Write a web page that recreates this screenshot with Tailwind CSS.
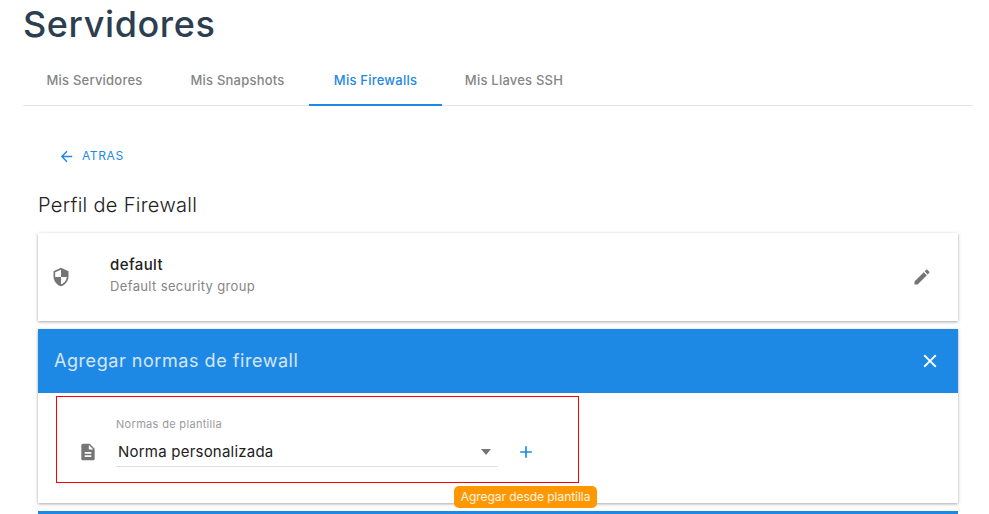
<!DOCTYPE html>
<html lang="en">
<head>
  <meta charset="utf-8" />
  <title>Servidores</title>
  <script src="https://cdn.jsdelivr.net/npm/@tailwindcss/browser@4"></script>
</head>
<body class="bg-white h-[514px] overflow-hidden font-['Inter',sans-serif] relative">
  <main class="pl-[23px] pr-4">
    <h1 class="h-[48px] text-[36px] leading-[49px] tracking-[0.6px] font-medium text-[#2c3e50]">Servidores</h1>

    <!-- tabs -->
    <nav class="mt-[7px] h-[51px] flex border-b border-[#e3e5e7] text-[13px] tracking-[0.22px] font-medium text-[#858585]">
      <a class="w-[143px] h-[51px] leading-[50px] text-center">Mis Servidores</a>
      <a class="w-[143px] h-[51px] leading-[50px] text-center">Mis Snapshots</a>
      <a class="w-[133px] h-[51px] leading-[50px] text-center text-[#1e88e5] border-b-2 border-[#1e88e5]">Mis Firewalls</a>
      <a class="w-[144px] h-[51px] leading-[50px] text-center">Mis Llaves SSH</a>
    </nav>

    <div class="px-[15px]">
      <!-- back -->
      <a class="mt-[40px] ml-[20px] h-[20px] flex items-center gap-[7px] text-[12px] tracking-[0.6px] text-[#1e88e5]">
        <svg class="w-[17px] h-[17px]" viewBox="0 0 24 24" fill="currentColor"><path d="M20 11H7.83l5.59-5.59L12 4l-8 8 8 8 1.41-1.41L7.83 13H20v-2z"/></svg>
        ATRAS
      </a>

      <h2 class="mt-[25px] h-[28px] text-[20px] leading-[28px] tracking-[0.3px] font-light text-[#212121]">Perfil de Firewall</h2>

      <!-- profile card -->
      <section class="mt-[14px] h-[88px] flex items-center bg-white shadow-[0_1px_3px_rgba(0,0,0,0.35)]">
        <svg class="ml-[13px] w-[20px] h-[20px] text-[#757575]" viewBox="0 0 24 24" fill="currentColor"><path d="M12 1 3 5v6c0 5.55 3.84 10.74 9 12 5.16-1.26 9-6.45 9-12V5l-9-4zm0 10.99h7c-.53 4.12-3.28 7.79-7 8.94V12H5V6.3l7-3.11v8.8z"/></svg>
        <div class="ml-[39px] flex-1 -mt-[3px]">
          <div class="text-[15px] leading-[20px] tracking-[0.4px] font-medium text-[#212121]">default</div>
          <div class="mt-[1px] text-[13px] leading-[20px] tracking-[0.36px] text-[#858585]">Default security group</div>
        </div>
        <svg class="mr-[26px] w-[20px] h-[20px] text-[#757575]" viewBox="0 0 24 24" fill="currentColor"><path d="M3 17.25V21h3.75L17.81 9.94l-3.75-3.75L3 17.25zM20.71 7.04a1 1 0 0 0 0-1.41l-2.34-2.34a1 1 0 0 0-1.41 0l-1.83 1.83 3.75 3.75 1.83-1.83z"/></svg>
      </section>

      <!-- add rules -->
      <section class="mt-[8px] h-[174px] bg-white shadow-[0_1px_3px_rgba(0,0,0,0.35)]">
        <header class="h-[64px] bg-[#1e88e5] flex items-center justify-between pl-[16px] pr-[17px] pb-[2px] text-white">
          <span class="text-[18px] tracking-[0.55px] text-white/80">Agregar normas de firewall</span>
          <svg class="w-[22px] h-[22px] mt-[2px]" viewBox="0 0 24 24" fill="currentColor"><path d="M19 6.41 17.59 5 12 10.59 6.41 5 5 6.41 10.59 12 5 17.59 6.41 19 12 13.41 17.59 19 19 17.59 13.41 12z"/></svg>
        </header>
        <div class="flex items-end pl-[40px] pt-[24px]">
          <svg class="mb-[5px] w-[20px] h-[20px] text-[#757575]" viewBox="0 0 24 24" fill="currentColor"><path d="M14 2H6c-1.1 0-2 .9-2 2v16c0 1.1.9 2 2 2h12c1.1 0 2-.9 2-2V8l-6-6zm2 16H8v-2h8v2zm0-4H8v-2h8v2zm-3-5V3.5L18.5 9H13z"/></svg>
          <div class="ml-[18px] w-[382px] border-b border-[#e0e0e0]">
            <div class="text-[11px] leading-[14px] tracking-[0.32px] text-[#9a9a9a]">Normas de plantilla</div>
            <div class="mt-[7px] h-[28px] flex items-center justify-between pl-[2px] text-[15px] tracking-[0.22px] text-[#212121]">
              Norma personalizada
              <span class="mr-[7px] w-0 h-0 border-x-[5px] border-x-transparent border-t-[6px] border-t-[#757575]"></span>
            </div>
          </div>
          <svg class="ml-[18px] mb-[5px] w-[20px] h-[20px] text-[#1e88e5]" viewBox="0 0 24 24" fill="currentColor"><path d="M19 13h-6v6h-2v-6H5v-2h6V5h2v6h6v2z"/></svg>
        </div>
      </section>

      <section class="mt-[8px] h-[3px] bg-[#1e88e5]"></section>
    </div>
  </main>

  <!-- annotation and tooltip on top -->
  <div class="absolute left-[56px] top-[396px] w-[523px] h-[87px] border border-[#ff0000]"></div>
  <div class="absolute left-[454px] top-[486px] w-[143px] h-[22px] rounded-[5px] bg-[#ff9800] text-white/90 text-[12px] leading-[22px] tracking-[-0.05px] text-center">Agregar desde plantilla</div>
</body>
</html>
